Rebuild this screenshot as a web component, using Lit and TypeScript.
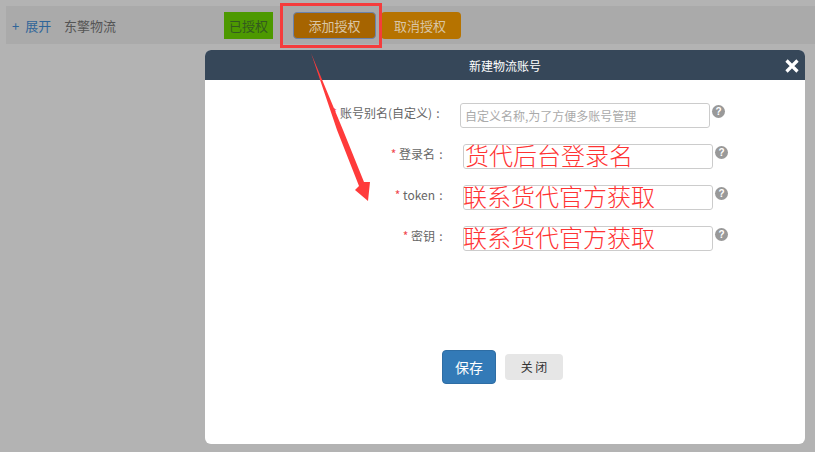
import { LitElement, html, css } from "lit";
import { customElement } from "lit/decorators.js";

@customElement("app-root")
export class AppRoot extends LitElement {
  static styles = css`
    :host {
      display: block;
      position: relative;
      width: 815px;
      height: 452px;
      overflow: hidden;
      background: #b3b3b3;
      font-family: "Noto Sans CJK SC", "Liberation Sans", sans-serif;
    }
    .bar {
      margin: 6px 0 0 6px;
      height: 38px;
      background: #aaaaaa;
      display: flex;
      align-items: center;
      font-size: 13px;
      box-sizing: border-box;
      padding: 0 0 0 6px;
    }
    .expand { color: #2f6599; width: 52px; white-space: nowrap; word-spacing: 3px; }
    .name { color: #555; width: 160px; white-space: nowrap; }
    .tag {
      height: 27px;
      line-height: 27px;
      text-align: center;
      box-sizing: border-box;
      white-space: nowrap;
    }
    .granted { width: 49px; background: #4d9900; color: #33591f; }
    .add {
      width: 83px;
      margin-left: 20px;
      background: #a66400;
      color: #d9c6a6;
      border: 1px solid #6b82ab;
      border-radius: 4px;
      line-height: 25px;
    }
    .cancel {
      width: 80px;
      margin-left: 5px;
      padding-right: 2px;
      background: #b67300;
      color: #d9c6a6;
      border-radius: 4px;
    }
    .modal {
      position: absolute;
      left: 205px;
      top: 50px;
      width: 600px;
      height: 394px;
      background: #fff;
      border-radius: 6px;
      overflow: hidden;
      display: flex;
      flex-direction: column;
    }
    .head {
      height: 30px;
      flex: none;
      background: #364759;
      color: #fff;
      font-size: 12px;
      display: flex;
      align-items: center;
      justify-content: center;
      position: relative;
    }
    .close-x { position: absolute; right: 6px; top: 9px; width: 14px; height: 14px; }
    .form {
      padding-top: 23px;
      display: flex;
      flex-direction: column;
      gap: 16px;
      flex: 1;
    }
    .row { display: flex; align-items: flex-start; height: 25px; }
    .row.first { margin-left: -3px; }
    .label {
      width: 242px;
      text-align: right;
      font-size: 12px;
      line-height: 20px;
      color: #666;
      white-space: nowrap;
    }
    .req { color: #f0484e; }
    .colon { display: inline-block; width: 12px; text-align: center; }
    .input {
      width: 250px;
      height: 25px;
      margin-left: 16px;
      box-sizing: border-box;
      border: 1px solid #ccc;
      border-radius: 3px;
      background: #fff;
      white-space: nowrap;
      overflow: visible;
    }
    .ph { font-size: 12px; line-height: 24px; color: #aaa; padding-left: 4px; }
    .hand {
      font-size: 24px;
      line-height: 20px;
      color: #ff3333;
      font-weight: 300;
      text-indent: -1px;
    }
    .hand.inset { text-indent: 1px; }
    .help {
      width: 13px;
      height: 13px;
      margin: 2px 0 0 2px;
      border-radius: 50%;
      background: #999;
      color: #fff;
      font: bold 10px/13px "Liberation Sans", sans-serif;
      text-align: center;
    }
    .actions {
      position: absolute;
      left: 237px;
      top: 300px;
      display: flex;
      align-items: center;
      gap: 9px;
    }
    .save {
      width: 54px;
      height: 34px;
      line-height: 32px;
      background: #337ab7;
      border: 1px solid #2e6da4;
      box-sizing: border-box;
      border-radius: 4px;
      color: #fff;
      font-size: 14px;
      text-align: center;
    }
    .shut {
      width: 58px;
      height: 26px;
      line-height: 26px;
      background: #e6e6e6;
      border-radius: 4px;
      color: #333;
      font-size: 12px;
      text-align: center;
    }
    .mark { position: absolute; left: 0; top: 0; pointer-events: none; }
  `;

  private row(label: string, body: unknown, first = false) {
    return html`<div class="row ${first ? "first" : ""}">
      <div class="label"><span class="req">*</span> ${label}<span class="colon">:</span></div>
      ${body}
      <div class="help">?</div>
    </div>`;
  }

  render() {
    return html`
      <div class="bar">
        <div class="expand">+ 展开</div>
        <div class="name">东擎物流</div>
        <div class="tag granted">已授权</div>
        <div class="tag add">添加授权</div>
        <div class="tag cancel">取消授权</div>
      </div>
      <div class="modal">
        <div class="head">
          新建物流账号
          <svg class="close-x" viewBox="0 0 14 14">
            <path d="M1.5 1.5 12.5 12.5M12.5 1.5 1.5 12.5" stroke="#fff" stroke-width="3.2" fill="none" />
          </svg>
        </div>
        <div class="form">
          ${this.row("账号别名(自定义)", html`<div class="input ph">自定义名称,为了方便多账号管理</div>`, true)}
          ${this.row("登录名", html`<div class="input hand inset">货代后台登录名</div>`)}
          ${this.row("token", html`<div class="input hand">联系货代官方获取</div>`)}
          ${this.row("密钥", html`<div class="input hand">联系货代官方获取</div>`)}
        </div>
        <div class="actions">
          <div class="save">保存</div>
          <div class="shut">关 闭</div>
        </div>
      </div>
      <svg class="mark" width="815" height="452" viewBox="0 0 815 452">
        <rect x="281.5" y="4.5" width="99" height="42" fill="none" stroke="#f53c3c" stroke-width="3" />
        <polygon points="311,53 343,130 364,182 370,182 368,201 355,190 359,186 337,130" fill="#ff3b3b" />
      </svg>
    `;
  }
}
